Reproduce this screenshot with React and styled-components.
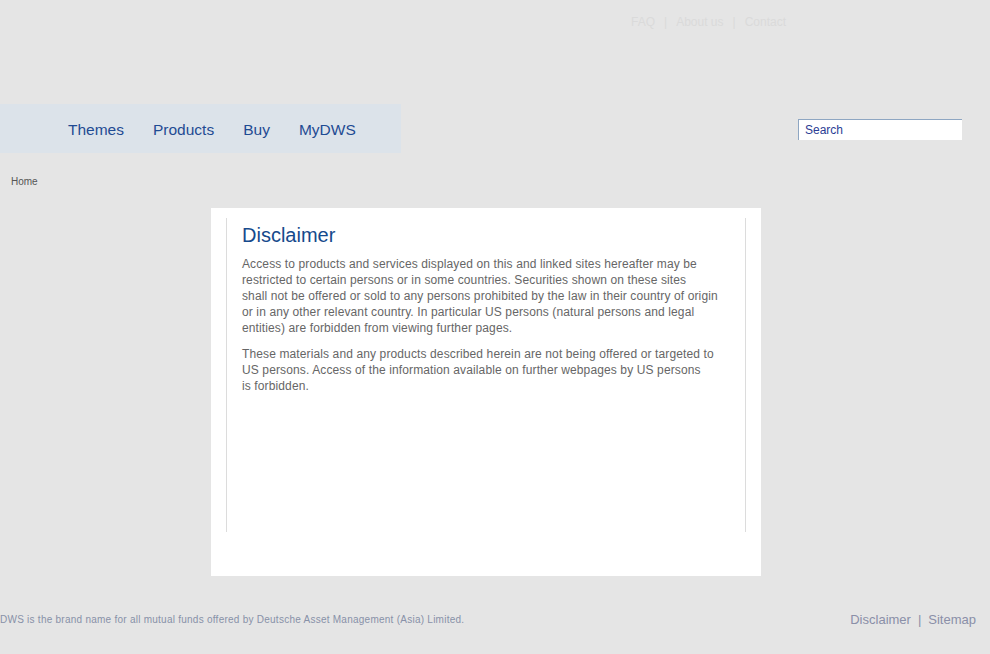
import React from "react";
import styled, { createGlobalStyle } from "styled-components";

const Global = createGlobalStyle`
    html, body {
        margin: 0;
        padding: 0;
        background: #e5e5e5;
        font-family: "Liberation Sans", Arial, sans-serif;
    }
`;

const Page = styled.div`
    width: 990px;
    height: 654px;
    overflow: hidden;
`;

const TopLinks = styled.div`
    height: 104px;
    display: flex;
    align-items: flex-start;
    padding: 15px 0 0 631px;
    box-sizing: border-box;
    font-size: 12px;
    color: #dadada;
`;

const TopLink = styled.span`
    line-height: 14px;
`;

const Sep = styled.span`
    margin: 0 ${(p) => p.gap || 9}px;
`;

const NavRow = styled.div`
    display: flex;
    align-items: center;
    justify-content: space-between;
    height: 49px;
    padding-right: 28px;
`;

const Nav = styled.nav`
    width: 401px;
    height: 49px;
    background: #dce3ea;
    display: flex;
    align-items: center;
    gap: 29px;
    padding: 3px 0 0 68px;
    box-sizing: border-box;
`;

const NavItem = styled.a`
    font-size: 15.5px;
    color: #1f4b93;
    text-decoration: none;
`;

const Search = styled.div`
    width: 164px;
    height: 21px;
    background: #fff;
    border-top: 1px solid #8ea6c2;
    border-left: 1px solid #8ea6c2;
    box-sizing: border-box;
    font-size: 12px;
    color: #2b3d94;
    padding: 3px 0 0 6px;
    margin-top: 1px;
`;

const Crumb = styled.div`
    font-size: 10px;
    color: #555;
    padding: 23px 0 0 11px;
    height: 55px;
    box-sizing: border-box;
`;

const Card = styled.main`
    width: 550px;
    height: 368px;
    margin-left: 211px;
    background: #fff;
    padding: 10px 15px 0;
    box-sizing: border-box;
`;

const Inner = styled.div`
    height: 314px;
    border-left: 1px solid #dcdcdc;
    border-right: 1px solid #dcdcdc;
    padding: 5px 20px 0 15px;
    box-sizing: border-box;
`;

const Title = styled.h1`
    margin: 0 0 9px;
    font-size: 20px;
    font-weight: normal;
    line-height: 24px;
    color: #164a8c;
`;

const Para = styled.p`
    margin: 0 0 10px;
    font-size: 12px;
    line-height: 16px;
    letter-spacing: 0.12px;
    color: #666;
`;

const Footer = styled.footer`
    display: flex;
    justify-content: space-between;
    align-items: center;
    padding: 36px 14px 0 0;
`;

const FootNote = styled.div`
    font-size: 10px;
    letter-spacing: 0.25px;
    color: #8891a8;
`;

const FootLinks = styled.div`
    font-size: 13px;
    color: #8a8fa8;
`;

export default function App() {
    return (
        <Page>
            <Global />
            <TopLinks>
                <TopLink>FAQ</TopLink>
                <Sep>|</Sep>
                <TopLink>About us</TopLink>
                <Sep>|</Sep>
                <TopLink>Contact</TopLink>
            </TopLinks>
            <NavRow>
                <Nav>
                    <NavItem>Themes</NavItem>
                    <NavItem>Products</NavItem>
                    <NavItem>Buy</NavItem>
                    <NavItem>MyDWS</NavItem>
                </Nav>
                <Search>Search</Search>
            </NavRow>
            <Crumb>Home</Crumb>
            <Card>
                <Inner>
                    <Title>Disclaimer</Title>
                    <Para>
                        Access to products and services displayed on this and linked sites hereafter may be<br />
                        restricted to certain persons or in some countries. Securities shown on these sites<br />
                        shall not be offered or sold to any persons prohibited by the law in their country of origin<br />
                        or in any other relevant country. In particular US persons (natural persons and legal<br />
                        entities) are forbidden from viewing further pages.
                    </Para>
                    <Para>
                        These materials and any products described herein are not being offered or targeted to<br />
                        US persons. Access of the information available on further webpages by US persons<br />
                        is forbidden.
                    </Para>
                </Inner>
            </Card>
            <Footer>
                <FootNote>
                    DWS is the brand name for all mutual funds offered by Deutsche Asset Management (Asia) Limited.
                </FootNote>
                <FootLinks>
                    Disclaimer<Sep gap={7}>|</Sep>Sitemap
                </FootLinks>
            </Footer>
        </Page>
    );
}
